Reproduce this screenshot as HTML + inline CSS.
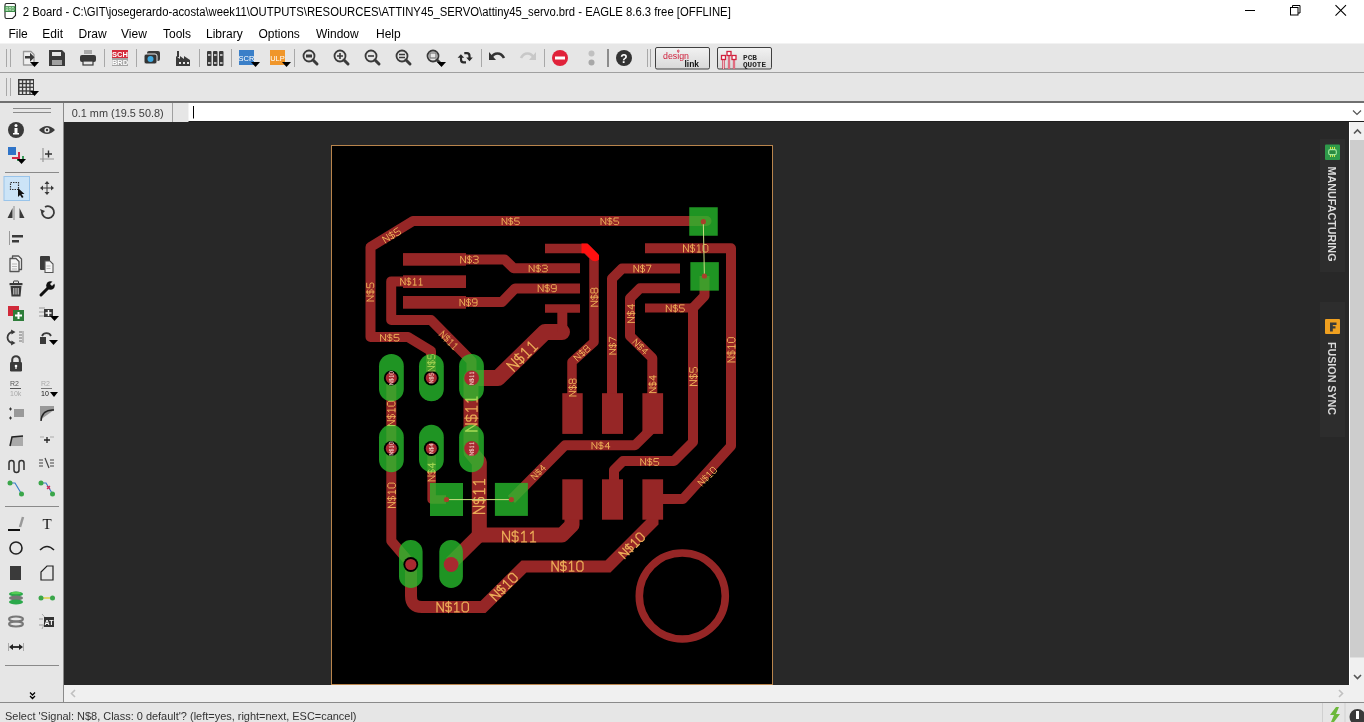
<!DOCTYPE html>
<html><head><meta charset="utf-8">
<style>
*{margin:0;padding:0;box-sizing:border-box}
html,body{width:1364px;height:722px;overflow:hidden;background:#f0f0f0;font-family:"Liberation Sans",sans-serif}
svg{position:absolute;left:0;top:0;will-change:transform}
</style></head><body>
<svg width="1364" height="722" viewBox="0 0 1364 722" font-family="Liberation Sans">
<rect x="0" y="0" width="1364" height="43" fill="#fff"/>
<rect x="0" y="43" width="1364" height="1" fill="#f2f2f2"/><rect x="0" y="44" width="1364" height="28" fill="#e6e6e6"/>
<rect x="0" y="72" width="1364" height="1" fill="#a0a0a0"/>
<rect x="0" y="73" width="1364" height="28" fill="#e6e6e6"/>
<rect x="0" y="101" width="1364" height="2" fill="#707070"/>
<rect x="0" y="103" width="63" height="599" fill="#e6e6e6"/>
<rect x="63" y="103" width="1" height="599" fill="#8a8a8a"/>
<rect x="64" y="103" width="109" height="19" fill="#e8e8e8"/>
<rect x="172" y="103" width="1" height="19" fill="#a0a0a0"/>
<rect x="173" y="103" width="16" height="19" fill="#e6e6e6"/>
<rect x="188.5" y="103" width="1176" height="18" fill="#fff"/>
<rect x="193" y="106" width="1" height="12.5" fill="#000"/>
<path d="M1353 110.5l4 4 4-4" fill="none" stroke="#555" stroke-width="1.2"/>
<rect x="188.5" y="121" width="1176" height="1" fill="#1e1e1e"/><rect x="64" y="122" width="1285" height="563" fill="#282828"/>
<rect x="1349" y="122" width="15" height="563" fill="#f0f0f0"/>
<rect x="1349" y="122" width="1" height="563" fill="#fff"/>
<rect x="1350" y="140" width="14" height="517.5" fill="#cdcdcd"/>
<path d="M1354 133.5l3.5-3.5 3.5 3.5" fill="none" stroke="#555" stroke-width="1.6"/>
<path d="M1354 675l3.5 3.5 3.5-3.5" fill="none" stroke="#555" stroke-width="1.6"/>
<rect x="64" y="685" width="1300" height="17" fill="#f0f0f0"/>
<path d="M75 690l-3.5 3.5 3.5 3.5" fill="none" stroke="#c0c0c0" stroke-width="1.6"/>
<path d="M1339 690l3.5 3.5-3.5 3.5" fill="none" stroke="#c0c0c0" stroke-width="1.6"/>
<rect x="0" y="702" width="1364" height="1" fill="#8a8a8a"/>
<rect x="0" y="703" width="1364" height="19" fill="#e6e6e6"/>
<rect x="1322" y="703" width="1" height="19" fill="#d0d0d0"/>
<rect x="1344.5" y="703" width="1" height="19" fill="#d0d0d0"/>
<path d="M1336 707l-6 8h4l-3 7h3l6-8h-4l3-7z" fill="#6cb83a"/>
<circle cx="1357.5" cy="717" r="8" fill="#3a3a3a"/><rect x="1356" y="711" width="3" height="8" fill="#fff"/>
<!-- right panel tabs -->
<rect x="1320" y="139" width="25" height="133" fill="#2d2d2d"/>
<rect x="1320" y="302" width="25" height="135" fill="#2d2d2d"/>
<rect x="1325" y="144.5" width="15" height="15.5" rx="1" fill="#2e9a4a"/><path d="M1330.5 147v10M1332.5 147v10M1334.5 147v10" stroke="#d8e040" stroke-width="1"/><rect x="1328.7" y="149.7" width="7.6" height="5" rx="1.5" fill="#2a8a40" stroke="#9ee89e" stroke-width="1.2"/>
<rect x="1325" y="319" width="15" height="15" rx="1" fill="#f0a020"/><path d="M1330 331.5V322.5H1336.5V325H1332.8V326.3H1335.5V328.6H1332.8V331.5Z" fill="#3a3a3a"/>
<text transform="translate(1328 166.5) rotate(90)" font-size="10.5" font-weight="bold" fill="#dcdcdc" textLength="95" lengthAdjust="spacingAndGlyphs">MANUFACTURING</text>
<text transform="translate(1328 342) rotate(90)" font-size="10.5" font-weight="bold" fill="#dcdcdc" textLength="73" lengthAdjust="spacingAndGlyphs">FUSION SYNC</text>
<text x="22.8" y="16" font-size="12" fill="#000" textLength="708" lengthAdjust="spacingAndGlyphs">2 Board - C:\GIT\josegerardo-acosta\week11\OUTPUTS\RESOURCES\ATTINY45_SERVO\attiny45_servo.brd - EAGLE 8.6.3 free [OFFLINE]</text>
<path d="M6.5 3.5h7.5q1.5 0 1.5 1.5v10.5l-3 3h-6q-1.5 0-1.5-1.5v-12q0-1.5 1.5-1.5z" fill="#fff" stroke="#222" stroke-width="1.1"/><rect x="4.5" y="6.2" width="11" height="5.8" fill="#3a8a46"/><text x="10" y="11" font-size="5.2" font-weight="bold" fill="#c8f0c8" text-anchor="middle" textLength="9" lengthAdjust="spacingAndGlyphs">BRD</text>
<g font-size="12" fill="#000"><text x="8.4" y="38">File</text><text x="42.3" y="38">Edit</text><text x="78.6" y="38">Draw</text><text x="121" y="38">View</text><text x="163" y="38">Tools</text><text x="206" y="38">Library</text><text x="258.5" y="38">Options</text><text x="316" y="38">Window</text><text x="376" y="38">Help</text></g>
<rect x="1245" y="10" width="10" height="1" fill="#000"/>
<rect x="1290.5" y="7.5" width="7.5" height="7.5" fill="none" stroke="#000" stroke-width="1"/><path d="M1292.5 7.5V5.5h7.5v7.5h-2" fill="none" stroke="#000" stroke-width="1"/>
<path d="M1335.5 5.2l10.5 10.5M1346 5.2l-10.5 10.5" stroke="#000" stroke-width="1.1"/>
<text x="71.7" y="117" font-size="11" fill="#3c3c3c" textLength="92" lengthAdjust="spacingAndGlyphs">0.1 mm (19.5 50.8)</text>
<text x="5" y="720" font-size="11" fill="#333" textLength="351.5" lengthAdjust="spacingAndGlyphs">Select 'Signal: N$8, Class: 0 default'? (left=yes, right=next, ESC=cancel)</text>
<rect x="6" y="49" width="1" height="18" fill="#a8a8a8"/><rect x="10" y="49" width="1" height="18" fill="#a8a8a8"/>
<rect x="6" y="78" width="1" height="18" fill="#a8a8a8"/><rect x="10" y="78" width="1" height="18" fill="#a8a8a8"/>
<rect x="104" y="49" width="1" height="18" fill="#a8a8a8"/>
<rect x="136" y="49" width="1" height="18" fill="#a8a8a8"/>
<rect x="199" y="49" width="1" height="18" fill="#a8a8a8"/>
<rect x="231" y="49" width="1" height="18" fill="#a8a8a8"/>
<rect x="294" y="49" width="1" height="18" fill="#a8a8a8"/>
<rect x="481" y="49" width="1" height="18" fill="#a8a8a8"/>
<rect x="544" y="49" width="1" height="18" fill="#a8a8a8"/>
<rect x="607" y="49" width="2" height="18" fill="#8c8c8c"/>
<rect x="647" y="49" width="1" height="18" fill="#a8a8a8"/><rect x="650" y="49" width="1" height="18" fill="#a8a8a8"/>
<path d="M23.5 51.5h7.5l3 3v10.5h-10.5z" fill="#f0f0f0" stroke="#999" stroke-width="1.3" stroke-linejoin="round"/><path d="M25 56h5v-3.2l4.5 4.5-4.5 4.5v-3.2h-5z" fill="#3a3a3a"/><path d="M30 62h9l-4.5 5z" fill="#000"/>
<path d="M49 50h13l3 3v13h-16z" fill="#3b3b3b"/><rect x="52" y="52" width="9" height="4" fill="#e6e6e6"/><rect x="52" y="60" width="10" height="5" fill="#a0a0a0"/>
<rect x="84" y="50" width="8" height="4" fill="#aaa"/><rect x="80" y="55" width="16" height="7" rx="2" fill="#3a3a3a"/><rect x="83" y="61" width="10" height="4" fill="#e6e6e6" stroke="#3a3a3a" stroke-width="1.2"/>
<rect x="112" y="50" width="16" height="8" fill="#d42c3c"/><rect x="112" y="58" width="16" height="8" fill="#a4a4a4"/><text x="120" y="57" font-size="7.5" font-weight="bold" fill="#fff" text-anchor="middle" font-family="Liberation Sans">SCH</text><text x="120" y="65" font-size="7.5" font-weight="bold" fill="#fff" text-anchor="middle" font-family="Liberation Sans">BRD</text>
<rect x="147" y="51" width="13" height="10" rx="2" fill="#3a3a3a"/><rect x="144" y="54" width="13" height="10" rx="2" fill="#333" stroke="#e6e6e6" stroke-width="1"/><circle cx="150.5" cy="59" r="3" fill="#3fa9e0"/>
<path d="M176 66v-10l4 3v-3l4 3v-3l6 4v6z" fill="#3a3a3a"/><rect x="177" y="51" width="2" height="6" fill="#3a3a3a"/><rect x="179" y="62" width="2" height="2" fill="#e6e6e6"/><rect x="183" y="62" width="2" height="2" fill="#e6e6e6"/><rect x="187" y="62" width="2" height="2" fill="#e6e6e6"/>
<rect x="207" y="51" width="4.5" height="15" rx="1" fill="#3a3a3a"/><rect x="208" y="54" width="2.5" height="2" fill="#bbb"/><rect x="208" y="62" width="2.5" height="2" fill="#bbb"/>
<rect x="213" y="51" width="4.5" height="15" rx="1" fill="#3a3a3a"/><rect x="214" y="54" width="2.5" height="2" fill="#bbb"/><rect x="214" y="62" width="2.5" height="2" fill="#bbb"/>
<rect x="219" y="51" width="4.5" height="15" rx="1" fill="#3a3a3a"/><rect x="220" y="54" width="2.5" height="2" fill="#bbb"/><rect x="220" y="62" width="2.5" height="2" fill="#bbb"/>
<rect x="239" y="50" width="15" height="15" fill="#3a7fc8"/><text x="246.5" y="61" font-size="7.5" fill="#fff" text-anchor="middle" font-family="Liberation Sans">SCR</text><path d="M251 62h9l-4.5 5z" fill="#000"/>
<rect x="270" y="50" width="15" height="15" fill="#f0962a"/><text x="277.5" y="61" font-size="7.5" fill="#fff" text-anchor="middle" font-family="Liberation Sans">ULP</text><path d="M282 62h9l-4.5 5z" fill="#000"/>
<circle cx="309" cy="56" r="5.5" fill="none" stroke="#3a3a3a" stroke-width="1.8"/><path d="M313 60l4 4" stroke="#3a3a3a" stroke-width="3" stroke-linecap="round"/><rect x="306" y="54.5" width="6" height="3" fill="#3a3a3a"/>
<circle cx="340" cy="56" r="5.5" fill="none" stroke="#3a3a3a" stroke-width="1.8"/><path d="M344 60l4 4" stroke="#3a3a3a" stroke-width="3" stroke-linecap="round"/><path d="M337 56h6M340 53v6" stroke="#3a3a3a" stroke-width="1.6"/>
<circle cx="371" cy="56" r="5.5" fill="none" stroke="#3a3a3a" stroke-width="1.8"/><path d="M375 60l4 4" stroke="#3a3a3a" stroke-width="3" stroke-linecap="round"/><path d="M368 56h6" stroke="#3a3a3a" stroke-width="1.6"/>
<circle cx="402" cy="56" r="5.5" fill="none" stroke="#3a3a3a" stroke-width="1.8"/><path d="M406 60l4 4" stroke="#3a3a3a" stroke-width="3" stroke-linecap="round"/><path d="M399 54.5h6M399 57.5h6" stroke="#3a3a3a" stroke-width="1.4"/>
<circle cx="433" cy="56" r="5.5" fill="none" stroke="#3a3a3a" stroke-width="1.8"/><path d="M437 60l4 4" stroke="#3a3a3a" stroke-width="3" stroke-linecap="round"/><rect x="430" y="53" width="6" height="5" fill="none" stroke="#777" stroke-width="1.2"/><path d="M437 62h9l-4.5 5z" fill="#000"/>
<path d="M466 62.3H463.5Q461 62.3 461 59.5V57M464.3 53.2H467Q469.5 53.2 469.5 56V58" fill="none" stroke="#2a2a2a" stroke-width="2.2"/><path d="M457.6 57.8L460.9 54.2L464.2 57.8ZM466.2 57.6L469.5 61.2L472.8 57.6Z" fill="#2a2a2a"/>
<path d="M491 58c3-6 10-6 13 0" fill="none" stroke="#333" stroke-width="2.6"/><path d="M489 52v8h7z" fill="#333"/>
<path d="M521 58c3-6 10-6 13 0" fill="none" stroke="#c8c8c8" stroke-width="2.6"/><path d="M536 52v8h-7z" fill="#c8c8c8"/>
<circle cx="560" cy="58" r="8" fill="#e0223a"/><rect x="555" y="56.5" width="10" height="3" fill="#fff"/>
<circle cx="591.5" cy="53.5" r="3" fill="#c0c0c0"/><circle cx="591.5" cy="62.5" r="3" fill="#a8a8a8"/>
<circle cx="624" cy="58" r="8" fill="#333"/><text x="624" y="62.5" font-size="12" font-weight="bold" fill="#fff" text-anchor="middle" font-family="Liberation Sans">?</text>
<defs><linearGradient id="btng" x1="0" y1="0" x2="0" y2="1"><stop offset="0" stop-color="#f2f2f2"/><stop offset="1" stop-color="#d8d8d8"/></linearGradient></defs>
<rect x="655.5" y="47.5" width="54" height="21.5" rx="1.5" fill="url(#btng)" stroke="#404040"/><text x="663" y="58.5" font-size="9.5" fill="#d0203c" font-family="Liberation Sans" textLength="26" lengthAdjust="spacingAndGlyphs">design</text><text x="684.5" y="67" font-size="9.5" font-weight="bold" fill="#111" font-family="Liberation Sans" textLength="14.5" lengthAdjust="spacingAndGlyphs">link</text><circle cx="678.3" cy="51" r="0.9" fill="none" stroke="#d0203c" stroke-width="0.8"/>
<rect x="717.5" y="47.5" width="54" height="21.5" rx="1.5" fill="url(#btng)" stroke="#404040"/><path d="M723.5 69v-10M729 69v-14M734 69v-10" stroke="#d0203c" stroke-width="2.2" fill="none"/><path d="M723.5 69v-10M729 69v-14M734 69v-10" stroke="#fff" stroke-width="0.7" fill="none"/><rect x="721.5" y="55.5" width="4" height="4" fill="#fff" stroke="#d0203c" stroke-width="1.3"/><rect x="727" y="51.5" width="4" height="4" fill="#fff" stroke="#d0203c" stroke-width="1.3"/><rect x="732" y="55.5" width="4" height="4" fill="#fff" stroke="#d0203c" stroke-width="1.3"/><text x="743" y="60" font-size="7.5" font-weight="bold" fill="#222" font-family="Liberation Mono" textLength="14" lengthAdjust="spacingAndGlyphs">PCB</text><text x="743" y="67" font-size="7.5" font-weight="bold" fill="#222" font-family="Liberation Mono" textLength="23" lengthAdjust="spacingAndGlyphs">QUOTE</text>
<rect x="18" y="79" width="16" height="16" fill="#3a3a3a"/><g fill="#e6e6e6"><rect x="19.5" y="80.5" width="2.4" height="2.4"/><rect x="19.5" y="84.2" width="2.4" height="2.4"/><rect x="19.5" y="87.9" width="2.4" height="2.4"/><rect x="19.5" y="91.6" width="2.4" height="2.4"/><rect x="23.2" y="80.5" width="2.4" height="2.4"/><rect x="23.2" y="84.2" width="2.4" height="2.4"/><rect x="23.2" y="87.9" width="2.4" height="2.4"/><rect x="23.2" y="91.6" width="2.4" height="2.4"/><rect x="26.9" y="80.5" width="2.4" height="2.4"/><rect x="26.9" y="84.2" width="2.4" height="2.4"/><rect x="26.9" y="87.9" width="2.4" height="2.4"/><rect x="26.9" y="91.6" width="2.4" height="2.4"/><rect x="30.6" y="80.5" width="2.4" height="2.4"/><rect x="30.6" y="84.2" width="2.4" height="2.4"/><rect x="30.6" y="87.9" width="2.4" height="2.4"/><rect x="30.6" y="91.6" width="2.4" height="2.4"/></g><path d="M30 91h9l-4.5 5z" fill="#000"/>
<rect x="13" y="108" width="38" height="1" fill="#8a8a8a"/><rect x="13" y="112" width="38" height="1" fill="#8a8a8a"/>
<rect x="5" y="172" width="54" height="1" fill="#8a8a8a"/><rect x="5" y="506" width="54" height="1" fill="#8a8a8a"/><rect x="5" y="665" width="54" height="1" fill="#8a8a8a"/>
<circle cx="16" cy="130" r="8" fill="#3a3a3a"/><rect x="14.5" y="128" width="3" height="6" fill="#fff"/><circle cx="16" cy="125.5" r="1.5" fill="#fff"/><rect x="13" y="133" width="6" height="1.5" fill="#fff"/>
<path d="M39 130q8-8 16 0q-8 8-16 0z" fill="#3a3a3a"/><circle cx="47" cy="130" r="2.6" fill="#e6e6e6"/><circle cx="47" cy="130" r="1.2" fill="#3a3a3a"/>
<rect x="8" y="147" width="8" height="8" fill="#2f74c8"/><path d="M18 152h2v7h-8v-2h6z" fill="#d02a4a"/><path d="M22 156h2v5h-7v-2h5z" fill="#3a9a5a"/><path d="M17 159h9l-4.5 5z" fill="#000"/>
<path d="M43 148v14M40 159h14" stroke="#999" stroke-width="1.2"/><path d="M45 154h7M48.5 150.5v7" stroke="#333" stroke-width="1.4"/>
<rect x="4" y="176.5" width="25.5" height="24" fill="#cce4f7" stroke="#99c4ea" stroke-width="1"/><rect x="10.5" y="182.5" width="8" height="7" fill="none" stroke="#333" stroke-dasharray="1.5 1" stroke-width="1.2"/><path d="M18 188l0 9 2-2 2 3 1.5-1-2-3h3z" fill="#111"/>
<path d="M47 181l-2.5 3h5zM47 195l-2.5-3h5zM40 188l3-2.5v5zM54 188l-3-2.5v5z" fill="#3a3a3a"/><path d="M47 183v10M42 188h10" stroke="#3a3a3a" stroke-width="1"/>
<path d="M14 206v14" stroke="#aaa" stroke-width="1.5"/><path d="M12.5 208l-5 10h5zM19.5 208l5 10h-5z" fill="#3a3a3a"/>
<path d="M42 212a6 6 0 1 0 3-5" fill="none" stroke="#3a3a3a" stroke-width="1.8"/><path d="M40 209l2 5 3-3z" fill="#3a3a3a"/>
<rect x="9" y="231" width="1" height="14" fill="#999"/><rect x="12" y="235" width="11" height="2.5" fill="#3a3a3a"/><rect x="12" y="240" width="7" height="2.5" fill="#3a3a3a"/>
<path d="M12.5 256h6l3 3v10.5h-9z" fill="#f4f4f4" stroke="#555" stroke-width="1.3" stroke-linejoin="round"/><path d="M10 258.5h6l3 3v10h-9z" fill="#f4f4f4" stroke="#555" stroke-width="1.3" stroke-linejoin="round"/><path d="M12 264h5M12 266.5h5M12 269h5" stroke="#aaa" stroke-width="0.8"/>
<rect x="40" y="256" width="10" height="14" rx="1" fill="#3a3a3a"/><path d="M45 261h5l3 3v8.5h-8z" fill="#f4f4f4" stroke="#555" stroke-width="1.1"/><path d="M46.5 266h4M46.5 268.5h4" stroke="#aaa" stroke-width="0.8"/>
<rect x="9.5" y="283" width="13" height="2.2" rx="0.5" fill="#3a3a3a"/><rect x="13.5" y="281" width="5" height="2.5" rx="0.5" fill="none" stroke="#3a3a3a" stroke-width="1"/><path d="M10.5 286h11l-1 10.5h-9z" fill="#3a3a3a"/><path d="M13.8 288v6.5M16 288v6.5M18.2 288v6.5" stroke="#e0e0e0" stroke-width="1"/>
<path d="M41 295l8.5-8.5" stroke="#111" stroke-width="3" stroke-linecap="round"/><circle cx="50.5" cy="285.5" r="4.3" fill="#111"/><path d="M51 285l5-5" stroke="#e6e6e6" stroke-width="2.8"/>
<rect x="8" y="306" width="11" height="10" fill="#d02a3a"/><rect x="13" y="310" width="11" height="11" fill="#2e7d3a"/><path d="M18.5 312v7M15 315.5h7" stroke="#fff" stroke-width="2"/>
<path d="M39 308h6M39 312h6M39 316h6" stroke="#999" stroke-width="1"/><rect x="44" y="309" width="9" height="8" fill="#3a3a3a"/><path d="M48.5 310v6M45.5 313h6" stroke="#fff" stroke-width="1.5"/><path d="M50 316h9l-4.5 5z" fill="#000"/>
<path d="M13 332a5.5 5.5 0 0 0 0 11" fill="none" stroke="#3a3a3a" stroke-width="1.8"/><path d="M11 329.5l4.5 2.5-4 2.5zM11 345.5l4.5-2.5-4-2.5z" fill="#3a3a3a"/><path d="M19 332h4M19 335h4M19 338h4M19 341h4" stroke="#999" stroke-width="1.3"/><rect x="22" y="331" width="2" height="12" fill="#bbb"/>
<path d="M42 336a5 5 0 0 1 9 0" fill="none" stroke="#3a3a3a" stroke-width="1.8"/><rect x="40" y="337" width="6" height="7" fill="#3a3a3a"/><path d="M49 340h9l-4.5 5z" fill="#000"/>
<path d="M12.2 363v-3a3.8 3.8 0 0 1 7.6 0v3" fill="none" stroke="#3a3a3a" stroke-width="2"/><rect x="10" y="362" width="12" height="9.5" rx="1.2" fill="#3a3a3a"/><circle cx="16" cy="366" r="1.3" fill="#fff"/><rect x="15.4" y="366" width="1.2" height="3" fill="#fff"/>
<text x="10" y="386" font-size="7" fill="#555" font-family="Liberation Sans">R2</text><rect x="10" y="388" width="11" height="1" fill="#555"/><text x="10" y="396" font-size="7" fill="#aaa" font-family="Liberation Sans">10k</text>
<text x="41" y="386" font-size="7" fill="#aaa" font-family="Liberation Sans">R2</text><rect x="41" y="388" width="11" height="1" fill="#777"/><text x="41" y="396" font-size="7" fill="#111" font-family="Liberation Sans">10</text><path d="M50 392h8l-4.0 5z" fill="#000"/>
<path d="M9 409h3M10.5 407.5v3M9 418h3M10.5 416.5v3" stroke="#333" stroke-width="1"/><rect x="14" y="409" width="10" height="8" fill="#999"/>
<path d="M40 420v-14h14v4" fill="#999"/><path d="M41 421q1-12 13-11" fill="none" stroke="#222" stroke-width="1.5"/>
<path d="M10 446l2-9 11-1v10z" fill="#aaa"/><path d="M10 446l2-9 11-1" fill="none" stroke="#222" stroke-width="1.5"/>
<path d="M40 437h4M50 437h4" stroke="#aaa" stroke-width="1"/><path d="M44 440h6M47 437v6" stroke="#222" stroke-width="1.3"/>
<path d="M9 470v-7a2.5 2.5 0 0 1 5 0v7a2.5 2.5 0 0 0 5 0v-7a2.5 2.5 0 0 1 5 0v7" fill="none" stroke="#333" stroke-width="1.5"/>
<path d="M39 460h4M39 463h4M39 466h4M50 460h4M50 463h4M50 466h4M45 458l4 10" stroke="#444" stroke-width="1.2"/>
<path d="M10 483h5l6 10" fill="none" stroke="#3a7fc8" stroke-width="1.2"/><circle cx="10" cy="483" r="2.5" fill="#3aa64a"/><circle cx="21.5" cy="494" r="2.5" fill="#3aa64a"/>
<path d="M41 483h5l6 10" fill="none" stroke="#3a7fc8" stroke-width="1.2"/><circle cx="41" cy="483" r="2.5" fill="#3aa64a"/><circle cx="52.5" cy="494" r="2.5" fill="#3aa64a"/><path d="M47 486l3 3M50 486l-3 3" stroke="#d02a5a" stroke-width="1.2"/>
<rect x="8" y="529" width="12" height="2" fill="#111"/><path d="M20 527l3-10" stroke="#999" stroke-width="2.5"/>
<text x="47" y="529" font-size="15" fill="#111" text-anchor="middle" font-family="Liberation Serif">T</text>
<circle cx="16" cy="548" r="6" fill="none" stroke="#222" stroke-width="1.6"/><path d="M40 550q7-7 14 0" fill="none" stroke="#222" stroke-width="1.6"/>
<rect x="10" y="566" width="11" height="14" fill="#3a3a3a"/><path d="M41 580v-8l6-6h6v14z" fill="none" stroke="#222" stroke-width="1.2"/>
<ellipse cx="16" cy="594" rx="7" ry="2.5" fill="#2aa84a"/><ellipse cx="16" cy="598" rx="7" ry="2.5" fill="#777"/><ellipse cx="16" cy="602" rx="7" ry="2.5" fill="#2aa84a"/><ellipse cx="16" cy="593" rx="5" ry="1.2" fill="#5c5"/>
<path d="M40 598h14" stroke="#d8d040" stroke-width="1.5"/><circle cx="41" cy="598" r="2.5" fill="#3aa64a"/><circle cx="52.5" cy="598" r="2.5" fill="#3aa64a"/>
<ellipse cx="16" cy="619" rx="7" ry="2.5" fill="none" stroke="#777" stroke-width="2"/><ellipse cx="16" cy="624" rx="7" ry="2.5" fill="none" stroke="#777" stroke-width="2"/>
<path d="M39 619h4M39 625h4" stroke="#999"/><path d="M42 614q6 4 0 15" fill="none" stroke="#aaa"/><rect x="44" y="617" width="10" height="10" fill="#333"/><text x="49" y="625" font-size="7" font-weight="bold" fill="#fff" text-anchor="middle" font-family="Liberation Sans">AT</text>
<path d="M11 647h10" stroke="#222" stroke-width="1.8"/><path d="M9 647l4-3v6zM23 647l-4-3v6z" fill="#222"/><path d="M8.5 643v8M23.5 643v8" stroke="#999" stroke-width="0.8"/>
<path d="M30 692.5l2.5 2.5 2.5-2.5M30 696l2.5 2.5 2.5-2.5" fill="none" stroke="#000" stroke-width="1.3"/>
<svg x="64" y="122" width="1285" height="563" viewBox="64 122 1285 563" overflow="hidden">
<rect x="331.5" y="145.5" width="441" height="539" fill="#000" stroke="#b8844c" stroke-width="1"/>
<path d="M706.5 221 L413 221 L370.5 247 L370.5 337 L408 337 L431 351 L431 376" fill="none" stroke="#962626" stroke-width="10" stroke-linecap="round" stroke-linejoin="round" stroke-miterlimit="1.3"/>
<path d="M704.5 276 L704.5 296 L693 308 L693 442 L674 461 L623 461 L614 470 L614 485" fill="none" stroke="#962626" stroke-width="10" stroke-linecap="butt" stroke-linejoin="round" stroke-miterlimit="1.3"/>
<path d="M645 308 L693 308" fill="none" stroke="#962626" stroke-width="9" stroke-linecap="butt" stroke-linejoin="round" stroke-miterlimit="1.3"/>
<path d="M645 248.3 L731 248.3 L731 446 L683 499 L660 499" fill="none" stroke="#962626" stroke-width="10" stroke-linecap="butt" stroke-linejoin="round" stroke-miterlimit="1.3"/>
<path d="M411 564 V596 Q411 607 422 607 H483 L524 566.5 H608 L652.5 522 V505" fill="none" stroke="#962626" stroke-width="12" stroke-linejoin="miter" stroke-miterlimit="1.3"/>
<path d="M391.3 378 L391.3 541 L411 564" fill="none" stroke="#962626" stroke-width="10" stroke-linecap="butt" stroke-linejoin="round" stroke-miterlimit="1.3"/>
<path d="M466 281.4 L391.2 281.4 L391.2 320 L431 320 L471.5 361 L471.5 378" fill="none" stroke="#962626" stroke-width="10" stroke-linecap="butt" stroke-linejoin="round" stroke-miterlimit="1.3"/>
<rect x="403" y="275.3" width="63" height="12.7" fill="#962626"/>
<path d="M471.5 378 L498 378 L545 332 L562 332" fill="none" stroke="#962626" stroke-width="16" stroke-linecap="round" stroke-linejoin="round" stroke-miterlimit="1.3"/>
<path d="M562.3 308 L562.3 332" fill="none" stroke="#962626" stroke-width="10" stroke-linecap="butt" stroke-linejoin="round" stroke-miterlimit="1.3"/>
<path d="M545 308.5 L580 308.5" fill="none" stroke="#962626" stroke-width="8.5" stroke-linecap="butt" stroke-linejoin="round" stroke-miterlimit="1.3"/>
<path d="M471 378 L471 452 L479.3 462 L479.3 535 L562 535 L572 525 L572 500" fill="none" stroke="#962626" stroke-width="15" stroke-linecap="butt" stroke-linejoin="round" stroke-miterlimit="1.3"/>
<path d="M479.3 535 L451 563" fill="none" stroke="#962626" stroke-width="14" stroke-linecap="butt" stroke-linejoin="round" stroke-miterlimit="1.3"/>
<rect x="403" y="253.1" width="63" height="12.6" fill="#962626"/>
<path d="M466 259.4 L504.5 259.4 L513.5 268.2 L580 268.2" fill="none" stroke="#962626" stroke-width="10" stroke-linecap="butt" stroke-linejoin="round" stroke-miterlimit="1.3"/>
<rect x="403" y="296" width="63" height="12.7" fill="#962626"/>
<path d="M466 302 L502 302 L515 288.5 L580 288.5" fill="none" stroke="#962626" stroke-width="10" stroke-linecap="butt" stroke-linejoin="round" stroke-miterlimit="1.3"/>
<path d="M545 248.5 L586 248.5 L594 256.5 L594 342 L572 362 L572 400" fill="none" stroke="#962626" stroke-width="9.5" stroke-linecap="butt" stroke-linejoin="round" stroke-miterlimit="1.3"/>
<path d="M581.5 243.6H587.5L599 255V259.5Q596.5 262.5 592 260.5L585 253.3H581.5Z" fill="#ff1010"/>
<path d="M680 268.6 L622 268.6 L612 278.6 L612 400" fill="none" stroke="#962626" stroke-width="10" stroke-linecap="butt" stroke-linejoin="round" stroke-miterlimit="1.3"/>
<path d="M680 288.2 L640 288.2 L630 298.2 L630 336 L652.3 358 L652.3 400" fill="none" stroke="#962626" stroke-width="10" stroke-linecap="butt" stroke-linejoin="round" stroke-miterlimit="1.3"/>
<path d="M652.5 428 L635 445.2 L565 445.2 L511.4 499.4" fill="none" stroke="#962626" stroke-width="10" stroke-linecap="butt" stroke-linejoin="round" stroke-miterlimit="1.3"/>
<path d="M431.6 448 L431.6 499.5 L446 499.5" fill="none" stroke="#962626" stroke-width="8.5" stroke-linecap="butt" stroke-linejoin="round" stroke-miterlimit="1.3"/>
<rect x="562.3" y="393.2" width="20.4" height="40.7" fill="#962626"/>
<rect x="562.3" y="479.3" width="20.4" height="40.4" fill="#962626"/>
<rect x="602" y="393.2" width="21" height="40.7" fill="#962626"/>
<rect x="602" y="479.3" width="21" height="40.4" fill="#962626"/>
<rect x="642.4" y="393.2" width="20.7" height="40.7" fill="#962626"/>
<rect x="642.4" y="479.3" width="20.7" height="40.4" fill="#962626"/>
<circle cx="682.3" cy="596" r="43" fill="none" stroke="#962626" stroke-width="7.6"/>
<path transform="translate(510.7 221.3) rotate(0) scale(0.7773 0.6700) translate(-11.0 -5)" d="M0 10V0L6 10V0M13.6 1.6L12.6 0.8H9.4L8.4 1.8V3.6L9.4 4.6H12.6L13.6 5.6V8.2L12.6 9.2H9.4L8.4 8.4M11 -0.6V10.6M21.8 0H16.4L16 4.6H20.6L22 5.8V8.6L20.8 10H17.2L16 8.8" fill="none" stroke="#eaaa56" stroke-width="1.0" stroke-linecap="round" stroke-linejoin="round" vector-effect="non-scaling-stroke"/>
<path transform="translate(609.8 221.3) rotate(0) scale(0.8000 0.6700) translate(-11.0 -5)" d="M0 10V0L6 10V0M13.6 1.6L12.6 0.8H9.4L8.4 1.8V3.6L9.4 4.6H12.6L13.6 5.6V8.2L12.6 9.2H9.4L8.4 8.4M11 -0.6V10.6M21.8 0H16.4L16 4.6H20.6L22 5.8V8.6L20.8 10H17.2L16 8.8" fill="none" stroke="#eaaa56" stroke-width="1.0" stroke-linecap="round" stroke-linejoin="round" vector-effect="non-scaling-stroke"/>
<path transform="translate(389.8 337.7) rotate(0) scale(0.8364 0.6600) translate(-11.0 -5)" d="M0 10V0L6 10V0M13.6 1.6L12.6 0.8H9.4L8.4 1.8V3.6L9.4 4.6H12.6L13.6 5.6V8.2L12.6 9.2H9.4L8.4 8.4M11 -0.6V10.6M21.8 0H16.4L16 4.6H20.6L22 5.8V8.6L20.8 10H17.2L16 8.8" fill="none" stroke="#eaaa56" stroke-width="1.0" stroke-linecap="round" stroke-linejoin="round" vector-effect="non-scaling-stroke"/>
<path transform="translate(411.8 281.6) rotate(0) scale(0.7400 0.7000) translate(-15.0 -5)" d="M0 10V0L6 10V0M13.6 1.6L12.6 0.8H9.4L8.4 1.8V3.6L9.4 4.6H12.6L13.6 5.6V8.2L12.6 9.2H9.4L8.4 8.4M11 -0.6V10.6M16.8 2.2L19 0V10M16.8 10H21.2M24.8 2.2L27 0V10M24.8 10H29.2" fill="none" stroke="#eaaa56" stroke-width="1.0" stroke-linecap="round" stroke-linejoin="round" vector-effect="non-scaling-stroke"/>
<path transform="translate(469.4 259.6) rotate(0) scale(0.7909 0.7000) translate(-11.0 -5)" d="M0 10V0L6 10V0M13.6 1.6L12.6 0.8H9.4L8.4 1.8V3.6L9.4 4.6H12.6L13.6 5.6V8.2L12.6 9.2H9.4L8.4 8.4M11 -0.6V10.6M16 1.2L17 0H21L22 1.2V3.8L21 4.9H18.2M21 4.9L22 6V8.8L21 10H17L16 8.8" fill="none" stroke="#eaaa56" stroke-width="1.0" stroke-linecap="round" stroke-linejoin="round" vector-effect="non-scaling-stroke"/>
<path transform="translate(538.2 268.5) rotate(0) scale(0.8182 0.6600) translate(-11.0 -5)" d="M0 10V0L6 10V0M13.6 1.6L12.6 0.8H9.4L8.4 1.8V3.6L9.4 4.6H12.6L13.6 5.6V8.2L12.6 9.2H9.4L8.4 8.4M11 -0.6V10.6M16 1.2L17 0H21L22 1.2V3.8L21 4.9H18.2M21 4.9L22 6V8.8L21 10H17L16 8.8" fill="none" stroke="#eaaa56" stroke-width="1.0" stroke-linecap="round" stroke-linejoin="round" vector-effect="non-scaling-stroke"/>
<path transform="translate(468.5 302.4) rotate(0) scale(0.7727 0.6900) translate(-11.0 -5)" d="M0 10V0L6 10V0M13.6 1.6L12.6 0.8H9.4L8.4 1.8V3.6L9.4 4.6H12.6L13.6 5.6V8.2L12.6 9.2H9.4L8.4 8.4M11 -0.6V10.6M22 4.6L21 5.6H17L16 4.6V1L17 0H21L22 1V8.6L20.6 10H17.4L16.4 9" fill="none" stroke="#eaaa56" stroke-width="1.0" stroke-linecap="round" stroke-linejoin="round" vector-effect="non-scaling-stroke"/>
<path transform="translate(547.2 288.2) rotate(0) scale(0.8182 0.7000) translate(-11.0 -5)" d="M0 10V0L6 10V0M13.6 1.6L12.6 0.8H9.4L8.4 1.8V3.6L9.4 4.6H12.6L13.6 5.6V8.2L12.6 9.2H9.4L8.4 8.4M11 -0.6V10.6M22 4.6L21 5.6H17L16 4.6V1L17 0H21L22 1V8.6L20.6 10H17.4L16.4 9" fill="none" stroke="#eaaa56" stroke-width="1.0" stroke-linecap="round" stroke-linejoin="round" vector-effect="non-scaling-stroke"/>
<path transform="translate(642.5 268.7) rotate(0) scale(0.7773 0.7000) translate(-11.0 -5)" d="M0 10V0L6 10V0M13.6 1.6L12.6 0.8H9.4L8.4 1.8V3.6L9.4 4.6H12.6L13.6 5.6V8.2L12.6 9.2H9.4L8.4 8.4M11 -0.6V10.6M16 0H22L18 10" fill="none" stroke="#eaaa56" stroke-width="1.0" stroke-linecap="round" stroke-linejoin="round" vector-effect="non-scaling-stroke"/>
<path transform="translate(695.7 248.3) rotate(0) scale(0.8133 0.7600) translate(-15.0 -5)" d="M0 10V0L6 10V0M13.6 1.6L12.6 0.8H9.4L8.4 1.8V3.6L9.4 4.6H12.6L13.6 5.6V8.2L12.6 9.2H9.4L8.4 8.4M11 -0.6V10.6M16.8 2.2L19 0V10M16.8 10H21.2M25.6 0H28.4L30 1.8V8.2L28.4 10H25.6L24 8.2V1.8Z" fill="none" stroke="#eaaa56" stroke-width="1.0" stroke-linecap="round" stroke-linejoin="round" vector-effect="non-scaling-stroke"/>
<path transform="translate(675.3 308.3) rotate(0) scale(0.8182 0.6900) translate(-11.0 -5)" d="M0 10V0L6 10V0M13.6 1.6L12.6 0.8H9.4L8.4 1.8V3.6L9.4 4.6H12.6L13.6 5.6V8.2L12.6 9.2H9.4L8.4 8.4M11 -0.6V10.6M21.8 0H16.4L16 4.6H20.6L22 5.8V8.6L20.8 10H17.2L16 8.8" fill="none" stroke="#eaaa56" stroke-width="1.0" stroke-linecap="round" stroke-linejoin="round" vector-effect="non-scaling-stroke"/>
<path transform="translate(600.9 445.6) rotate(0) scale(0.8091 0.6600) translate(-11.0 -5)" d="M0 10V0L6 10V0M13.6 1.6L12.6 0.8H9.4L8.4 1.8V3.6L9.4 4.6H12.6L13.6 5.6V8.2L12.6 9.2H9.4L8.4 8.4M11 -0.6V10.6M20.4 10V0L16 6.8H22" fill="none" stroke="#eaaa56" stroke-width="1.0" stroke-linecap="round" stroke-linejoin="round" vector-effect="non-scaling-stroke"/>
<path transform="translate(649.7 461.9) rotate(0) scale(0.8136 0.6800) translate(-11.0 -5)" d="M0 10V0L6 10V0M13.6 1.6L12.6 0.8H9.4L8.4 1.8V3.6L9.4 4.6H12.6L13.6 5.6V8.2L12.6 9.2H9.4L8.4 8.4M11 -0.6V10.6M21.8 0H16.4L16 4.6H20.6L22 5.8V8.6L20.8 10H17.2L16 8.8" fill="none" stroke="#eaaa56" stroke-width="1.0" stroke-linecap="round" stroke-linejoin="round" vector-effect="non-scaling-stroke"/>
<path transform="translate(519.6 536.5) rotate(0) scale(1.1267 1.0800) translate(-15.0 -5)" d="M0 10V0L6 10V0M13.6 1.6L12.6 0.8H9.4L8.4 1.8V3.6L9.4 4.6H12.6L13.6 5.6V8.2L12.6 9.2H9.4L8.4 8.4M11 -0.6V10.6M16.8 2.2L19 0V10M16.8 10H21.2M24.8 2.2L27 0V10M24.8 10H29.2" fill="none" stroke="#eaaa56" stroke-width="1.3" stroke-linecap="round" stroke-linejoin="round" vector-effect="non-scaling-stroke"/>
<path transform="translate(567.5 566.2) rotate(0) scale(1.0333 1.0000) translate(-15.0 -5)" d="M0 10V0L6 10V0M13.6 1.6L12.6 0.8H9.4L8.4 1.8V3.6L9.4 4.6H12.6L13.6 5.6V8.2L12.6 9.2H9.4L8.4 8.4M11 -0.6V10.6M16.8 2.2L19 0V10M16.8 10H21.2M25.6 0H28.4L30 1.8V8.2L28.4 10H25.6L24 8.2V1.8Z" fill="none" stroke="#eaaa56" stroke-width="1.3" stroke-linecap="round" stroke-linejoin="round" vector-effect="non-scaling-stroke"/>
<path transform="translate(452.7 607) rotate(0) scale(1.0467 0.9800) translate(-15.0 -5)" d="M0 10V0L6 10V0M13.6 1.6L12.6 0.8H9.4L8.4 1.8V3.6L9.4 4.6H12.6L13.6 5.6V8.2L12.6 9.2H9.4L8.4 8.4M11 -0.6V10.6M16.8 2.2L19 0V10M16.8 10H21.2M25.6 0H28.4L30 1.8V8.2L28.4 10H25.6L24 8.2V1.8Z" fill="none" stroke="#eaaa56" stroke-width="1.3" stroke-linecap="round" stroke-linejoin="round" vector-effect="non-scaling-stroke"/>
<path transform="translate(370.2 292) rotate(-90) scale(0.8182 0.7000) translate(-11.0 -5)" d="M0 10V0L6 10V0M13.6 1.6L12.6 0.8H9.4L8.4 1.8V3.6L9.4 4.6H12.6L13.6 5.6V8.2L12.6 9.2H9.4L8.4 8.4M11 -0.6V10.6M21.8 0H16.4L16 4.6H20.6L22 5.8V8.6L20.8 10H17.2L16 8.8" fill="none" stroke="#eaaa56" stroke-width="1.0" stroke-linecap="round" stroke-linejoin="round" vector-effect="non-scaling-stroke"/>
<path transform="translate(594.3 297.2) rotate(-90) scale(0.8182 0.7000) translate(-11.0 -5)" d="M0 10V0L6 10V0M13.6 1.6L12.6 0.8H9.4L8.4 1.8V3.6L9.4 4.6H12.6L13.6 5.6V8.2L12.6 9.2H9.4L8.4 8.4M11 -0.6V10.6M17 0H21L21.8 1V3.8L21 4.8H17L16.2 3.8V1ZM17 4.8L16 5.8V9L17 10H21L22 9V5.8L21 4.8" fill="none" stroke="#eaaa56" stroke-width="1.0" stroke-linecap="round" stroke-linejoin="round" vector-effect="non-scaling-stroke"/>
<path transform="translate(631 313.4) rotate(-90) scale(0.8182 0.7000) translate(-11.0 -5)" d="M0 10V0L6 10V0M13.6 1.6L12.6 0.8H9.4L8.4 1.8V3.6L9.4 4.6H12.6L13.6 5.6V8.2L12.6 9.2H9.4L8.4 8.4M11 -0.6V10.6M20.4 10V0L16 6.8H22" fill="none" stroke="#eaaa56" stroke-width="1.0" stroke-linecap="round" stroke-linejoin="round" vector-effect="non-scaling-stroke"/>
<path transform="translate(572.6 387.5) rotate(-90) scale(0.7727 0.7000) translate(-11.0 -5)" d="M0 10V0L6 10V0M13.6 1.6L12.6 0.8H9.4L8.4 1.8V3.6L9.4 4.6H12.6L13.6 5.6V8.2L12.6 9.2H9.4L8.4 8.4M11 -0.6V10.6M17 0H21L21.8 1V3.8L21 4.8H17L16.2 3.8V1ZM17 4.8L16 5.8V9L17 10H21L22 9V5.8L21 4.8" fill="none" stroke="#eaaa56" stroke-width="1.0" stroke-linecap="round" stroke-linejoin="round" vector-effect="non-scaling-stroke"/>
<path transform="translate(612.6 345.6) rotate(-90) scale(0.7727 0.6600) translate(-11.0 -5)" d="M0 10V0L6 10V0M13.6 1.6L12.6 0.8H9.4L8.4 1.8V3.6L9.4 4.6H12.6L13.6 5.6V8.2L12.6 9.2H9.4L8.4 8.4M11 -0.6V10.6M16 0H22L18 10" fill="none" stroke="#eaaa56" stroke-width="1.0" stroke-linecap="round" stroke-linejoin="round" vector-effect="non-scaling-stroke"/>
<path transform="translate(652.6 384.1) rotate(-90) scale(0.7727 0.7000) translate(-11.0 -5)" d="M0 10V0L6 10V0M13.6 1.6L12.6 0.8H9.4L8.4 1.8V3.6L9.4 4.6H12.6L13.6 5.6V8.2L12.6 9.2H9.4L8.4 8.4M11 -0.6V10.6M20.4 10V0L16 6.8H22" fill="none" stroke="#eaaa56" stroke-width="1.0" stroke-linecap="round" stroke-linejoin="round" vector-effect="non-scaling-stroke"/>
<path transform="translate(693.4 376.5) rotate(-90) scale(0.8182 0.7400) translate(-11.0 -5)" d="M0 10V0L6 10V0M13.6 1.6L12.6 0.8H9.4L8.4 1.8V3.6L9.4 4.6H12.6L13.6 5.6V8.2L12.6 9.2H9.4L8.4 8.4M11 -0.6V10.6M21.8 0H16.4L16 4.6H20.6L22 5.8V8.6L20.8 10H17.2L16 8.8" fill="none" stroke="#eaaa56" stroke-width="1.0" stroke-linecap="round" stroke-linejoin="round" vector-effect="non-scaling-stroke"/>
<path transform="translate(731.2 349.8) rotate(-90) scale(0.8100 0.7600) translate(-15.0 -5)" d="M0 10V0L6 10V0M13.6 1.6L12.6 0.8H9.4L8.4 1.8V3.6L9.4 4.6H12.6L13.6 5.6V8.2L12.6 9.2H9.4L8.4 8.4M11 -0.6V10.6M16.8 2.2L19 0V10M16.8 10H21.2M25.6 0H28.4L30 1.8V8.2L28.4 10H25.6L24 8.2V1.8Z" fill="none" stroke="#eaaa56" stroke-width="1.0" stroke-linecap="round" stroke-linejoin="round" vector-effect="non-scaling-stroke"/>
<path transform="translate(471.3 413.5) rotate(-90) scale(1.1667 1.1500) translate(-15.0 -5)" d="M0 10V0L6 10V0M13.6 1.6L12.6 0.8H9.4L8.4 1.8V3.6L9.4 4.6H12.6L13.6 5.6V8.2L12.6 9.2H9.4L8.4 8.4M11 -0.6V10.6M16.8 2.2L19 0V10M16.8 10H21.2M24.8 2.2L27 0V10M24.8 10H29.2" fill="none" stroke="#eaaa56" stroke-width="1.3" stroke-linecap="round" stroke-linejoin="round" vector-effect="non-scaling-stroke"/>
<path transform="translate(478.9 495.9) rotate(-90) scale(1.1667 1.1500) translate(-15.0 -5)" d="M0 10V0L6 10V0M13.6 1.6L12.6 0.8H9.4L8.4 1.8V3.6L9.4 4.6H12.6L13.6 5.6V8.2L12.6 9.2H9.4L8.4 8.4M11 -0.6V10.6M16.8 2.2L19 0V10M16.8 10H21.2M24.8 2.2L27 0V10M24.8 10H29.2" fill="none" stroke="#eaaa56" stroke-width="1.3" stroke-linecap="round" stroke-linejoin="round" vector-effect="non-scaling-stroke"/>
<path transform="translate(391.2 413.4) rotate(-90) scale(0.8100 0.7600) translate(-15.0 -5)" d="M0 10V0L6 10V0M13.6 1.6L12.6 0.8H9.4L8.4 1.8V3.6L9.4 4.6H12.6L13.6 5.6V8.2L12.6 9.2H9.4L8.4 8.4M11 -0.6V10.6M16.8 2.2L19 0V10M16.8 10H21.2M25.6 0H28.4L30 1.8V8.2L28.4 10H25.6L24 8.2V1.8Z" fill="none" stroke="#eaaa56" stroke-width="1.0" stroke-linecap="round" stroke-linejoin="round" vector-effect="non-scaling-stroke"/>
<path transform="translate(391.6 495.3) rotate(-90) scale(0.8133 0.7600) translate(-15.0 -5)" d="M0 10V0L6 10V0M13.6 1.6L12.6 0.8H9.4L8.4 1.8V3.6L9.4 4.6H12.6L13.6 5.6V8.2L12.6 9.2H9.4L8.4 8.4M11 -0.6V10.6M16.8 2.2L19 0V10M16.8 10H21.2M25.6 0H28.4L30 1.8V8.2L28.4 10H25.6L24 8.2V1.8Z" fill="none" stroke="#eaaa56" stroke-width="1.0" stroke-linecap="round" stroke-linejoin="round" vector-effect="non-scaling-stroke"/>
<path transform="translate(431.5 472) rotate(-90) scale(0.8091 0.7400) translate(-11.0 -5)" d="M0 10V0L6 10V0M13.6 1.6L12.6 0.8H9.4L8.4 1.8V3.6L9.4 4.6H12.6L13.6 5.6V8.2L12.6 9.2H9.4L8.4 8.4M11 -0.6V10.6M20.4 10V0L16 6.8H22" fill="none" stroke="#eaaa56" stroke-width="1.0" stroke-linecap="round" stroke-linejoin="round" vector-effect="non-scaling-stroke"/>
<path transform="translate(391.7 235.3) rotate(-31.5) scale(0.8182 0.7000) translate(-11.0 -5)" d="M0 10V0L6 10V0M13.6 1.6L12.6 0.8H9.4L8.4 1.8V3.6L9.4 4.6H12.6L13.6 5.6V8.2L12.6 9.2H9.4L8.4 8.4M11 -0.6V10.6M21.8 0H16.4L16 4.6H20.6L22 5.8V8.6L20.8 10H17.2L16 8.8" fill="none" stroke="#eaaa56" stroke-width="1.0" stroke-linecap="round" stroke-linejoin="round" vector-effect="non-scaling-stroke"/>
<path transform="translate(449 340.5) rotate(45) scale(0.7000 0.6800) translate(-15.0 -5)" d="M0 10V0L6 10V0M13.6 1.6L12.6 0.8H9.4L8.4 1.8V3.6L9.4 4.6H12.6L13.6 5.6V8.2L12.6 9.2H9.4L8.4 8.4M11 -0.6V10.6M16.8 2.2L19 0V10M16.8 10H21.2M24.8 2.2L27 0V10M24.8 10H29.2" fill="none" stroke="#eaaa56" stroke-width="1.0" stroke-linecap="round" stroke-linejoin="round" vector-effect="non-scaling-stroke"/>
<path transform="translate(522.5 355.4) rotate(-45) scale(1.1333 1.1000) translate(-15.0 -5)" d="M0 10V0L6 10V0M13.6 1.6L12.6 0.8H9.4L8.4 1.8V3.6L9.4 4.6H12.6L13.6 5.6V8.2L12.6 9.2H9.4L8.4 8.4M11 -0.6V10.6M16.8 2.2L19 0V10M16.8 10H21.2M24.8 2.2L27 0V10M24.8 10H29.2" fill="none" stroke="#eaaa56" stroke-width="1.3" stroke-linecap="round" stroke-linejoin="round" vector-effect="non-scaling-stroke"/>
<path transform="translate(582 353) rotate(-42) scale(0.7727 0.6600) translate(-11.0 -5)" d="M0 10V0L6 10V0M13.6 1.6L12.6 0.8H9.4L8.4 1.8V3.6L9.4 4.6H12.6L13.6 5.6V8.2L12.6 9.2H9.4L8.4 8.4M11 -0.6V10.6M17 0H21L21.8 1V3.8L21 4.8H17L16.2 3.8V1ZM17 4.8L16 5.8V9L17 10H21L22 9V5.8L21 4.8" fill="none" stroke="#eaaa56" stroke-width="1.0" stroke-linecap="round" stroke-linejoin="round" vector-effect="non-scaling-stroke"/>
<path transform="translate(640.5 346.8) rotate(45) scale(0.7500 0.6500) translate(-11.0 -5)" d="M0 10V0L6 10V0M13.6 1.6L12.6 0.8H9.4L8.4 1.8V3.6L9.4 4.6H12.6L13.6 5.6V8.2L12.6 9.2H9.4L8.4 8.4M11 -0.6V10.6M20.4 10V0L16 6.8H22" fill="none" stroke="#eaaa56" stroke-width="1.0" stroke-linecap="round" stroke-linejoin="round" vector-effect="non-scaling-stroke"/>
<path transform="translate(538.5 472.1) rotate(-45) scale(0.7045 0.6300) translate(-11.0 -5)" d="M0 10V0L6 10V0M13.6 1.6L12.6 0.8H9.4L8.4 1.8V3.6L9.4 4.6H12.6L13.6 5.6V8.2L12.6 9.2H9.4L8.4 8.4M11 -0.6V10.6M20.4 10V0L16 6.8H22" fill="none" stroke="#eaaa56" stroke-width="1.0" stroke-linecap="round" stroke-linejoin="round" vector-effect="non-scaling-stroke"/>
<path transform="translate(707.4 476.3) rotate(-45) scale(0.7000 0.6600) translate(-15.0 -5)" d="M0 10V0L6 10V0M13.6 1.6L12.6 0.8H9.4L8.4 1.8V3.6L9.4 4.6H12.6L13.6 5.6V8.2L12.6 9.2H9.4L8.4 8.4M11 -0.6V10.6M16.8 2.2L19 0V10M16.8 10H21.2M25.6 0H28.4L30 1.8V8.2L28.4 10H25.6L24 8.2V1.8Z" fill="none" stroke="#eaaa56" stroke-width="1.0" stroke-linecap="round" stroke-linejoin="round" vector-effect="non-scaling-stroke"/>
<path transform="translate(504 586.6) rotate(-45) scale(1.0333 0.9500) translate(-15.0 -5)" d="M0 10V0L6 10V0M13.6 1.6L12.6 0.8H9.4L8.4 1.8V3.6L9.4 4.6H12.6L13.6 5.6V8.2L12.6 9.2H9.4L8.4 8.4M11 -0.6V10.6M16.8 2.2L19 0V10M16.8 10H21.2M25.6 0H28.4L30 1.8V8.2L28.4 10H25.6L24 8.2V1.8Z" fill="none" stroke="#eaaa56" stroke-width="1.3" stroke-linecap="round" stroke-linejoin="round" vector-effect="non-scaling-stroke"/>
<path transform="translate(632 545.3) rotate(-45) scale(0.9533 0.9000) translate(-15.0 -5)" d="M0 10V0L6 10V0M13.6 1.6L12.6 0.8H9.4L8.4 1.8V3.6L9.4 4.6H12.6L13.6 5.6V8.2L12.6 9.2H9.4L8.4 8.4M11 -0.6V10.6M16.8 2.2L19 0V10M16.8 10H21.2M25.6 0H28.4L30 1.8V8.2L28.4 10H25.6L24 8.2V1.8Z" fill="none" stroke="#eaaa56" stroke-width="1.3" stroke-linecap="round" stroke-linejoin="round" vector-effect="non-scaling-stroke"/>
<rect x="379.0" y="353.90000000000003" width="24.8" height="47.4" rx="12.4" fill="rgba(40,190,45,0.78)"/>
<rect x="419.0" y="353.90000000000003" width="24.8" height="47.4" rx="12.4" fill="rgba(40,190,45,0.78)"/>
<rect x="459.1" y="353.90000000000003" width="24.8" height="47.4" rx="12.4" fill="rgba(40,190,45,0.78)"/>
<rect x="379.0" y="424.8" width="24.8" height="47.4" rx="12.4" fill="rgba(40,190,45,0.78)"/>
<rect x="419.0" y="424.8" width="24.8" height="47.4" rx="12.4" fill="rgba(40,190,45,0.78)"/>
<rect x="459.1" y="424.8" width="24.8" height="47.4" rx="12.4" fill="rgba(40,190,45,0.78)"/>
<rect x="399.0" y="540" width="23.6" height="48" rx="11.8" fill="rgba(40,190,45,0.78)"/>
<rect x="439.3" y="540" width="23.6" height="48" rx="11.8" fill="rgba(40,190,45,0.78)"/>
<rect x="689.25" y="207.25" width="28.5" height="28.5" fill="rgba(40,190,45,0.78)"/>
<rect x="690.35" y="262.15" width="28.5" height="28.5" fill="rgba(40,190,45,0.78)"/>
<rect x="430.0" y="483.0" width="33" height="33" fill="rgba(40,190,45,0.78)"/>
<rect x="494.9" y="482.9" width="33" height="33" fill="rgba(40,190,45,0.78)"/>
<circle cx="391.3" cy="378" r="7.4" fill="#000"/><circle cx="391.3" cy="378" r="5.6" fill="#a82a30"/>
<circle cx="431.3" cy="378" r="7.4" fill="#000"/><circle cx="431.3" cy="378" r="5.6" fill="#a82a30"/>
<circle cx="391.3" cy="448.5" r="7.4" fill="#000"/><circle cx="391.3" cy="448.5" r="5.6" fill="#a82a30"/>
<circle cx="431.3" cy="448.5" r="7.4" fill="#000"/><circle cx="431.3" cy="448.5" r="5.6" fill="#a82a30"/>
<circle cx="410.8" cy="564.5" r="7.4" fill="#000"/><circle cx="410.8" cy="564.5" r="5.6" fill="#a82a30"/>
<circle cx="471.6" cy="378" r="7.4" fill="#a82a30"/>
<circle cx="471.6" cy="448.5" r="7.4" fill="#a82a30"/>
<circle cx="451.1" cy="564.5" r="7.4" fill="#a82a30"/>
<path transform="translate(391.3 378) rotate(-90) scale(0.4267 0.4200) translate(-15.0 -5)" d="M0 10V0L6 10V0M13.6 1.6L12.6 0.8H9.4L8.4 1.8V3.6L9.4 4.6H12.6L13.6 5.6V8.2L12.6 9.2H9.4L8.4 8.4M11 -0.6V10.6M16.8 2.2L19 0V10M16.8 10H21.2M25.6 0H28.4L30 1.8V8.2L28.4 10H25.6L24 8.2V1.8Z" fill="none" stroke="#f0c8c0" stroke-width="0.8" vector-effect="non-scaling-stroke"/>
<path transform="translate(431.3 378) rotate(-90) scale(0.4364 0.4200) translate(-11.0 -5)" d="M0 10V0L6 10V0M13.6 1.6L12.6 0.8H9.4L8.4 1.8V3.6L9.4 4.6H12.6L13.6 5.6V8.2L12.6 9.2H9.4L8.4 8.4M11 -0.6V10.6M21.8 0H16.4L16 4.6H20.6L22 5.8V8.6L20.8 10H17.2L16 8.8" fill="none" stroke="#f0c8c0" stroke-width="0.8" vector-effect="non-scaling-stroke"/>
<path transform="translate(471.6 378) rotate(-90) scale(0.4267 0.4200) translate(-15.0 -5)" d="M0 10V0L6 10V0M13.6 1.6L12.6 0.8H9.4L8.4 1.8V3.6L9.4 4.6H12.6L13.6 5.6V8.2L12.6 9.2H9.4L8.4 8.4M11 -0.6V10.6M16.8 2.2L19 0V10M16.8 10H21.2M24.8 2.2L27 0V10M24.8 10H29.2" fill="none" stroke="#f0c8c0" stroke-width="0.8" vector-effect="non-scaling-stroke"/>
<path transform="translate(391.3 448.5) rotate(-90) scale(0.4267 0.4200) translate(-15.0 -5)" d="M0 10V0L6 10V0M13.6 1.6L12.6 0.8H9.4L8.4 1.8V3.6L9.4 4.6H12.6L13.6 5.6V8.2L12.6 9.2H9.4L8.4 8.4M11 -0.6V10.6M16.8 2.2L19 0V10M16.8 10H21.2M25.6 0H28.4L30 1.8V8.2L28.4 10H25.6L24 8.2V1.8Z" fill="none" stroke="#f0c8c0" stroke-width="0.8" vector-effect="non-scaling-stroke"/>
<path transform="translate(431.3 448.5) rotate(-90) scale(0.4364 0.4200) translate(-11.0 -5)" d="M0 10V0L6 10V0M13.6 1.6L12.6 0.8H9.4L8.4 1.8V3.6L9.4 4.6H12.6L13.6 5.6V8.2L12.6 9.2H9.4L8.4 8.4M11 -0.6V10.6M20.4 10V0L16 6.8H22" fill="none" stroke="#f0c8c0" stroke-width="0.8" vector-effect="non-scaling-stroke"/>
<path transform="translate(471.6 448.5) rotate(-90) scale(0.4267 0.4200) translate(-15.0 -5)" d="M0 10V0L6 10V0M13.6 1.6L12.6 0.8H9.4L8.4 1.8V3.6L9.4 4.6H12.6L13.6 5.6V8.2L12.6 9.2H9.4L8.4 8.4M11 -0.6V10.6M16.8 2.2L19 0V10M16.8 10H21.2M24.8 2.2L27 0V10M24.8 10H29.2" fill="none" stroke="#f0c8c0" stroke-width="0.8" vector-effect="non-scaling-stroke"/>
<path d="M703.3 221.7L704.4 276M446.5 499.6H511.4" stroke="#c8e080" stroke-width="1" fill="none"/>
<circle cx="703.3" cy="221.7" r="2.6" fill="#a8402a"/>
<circle cx="704.4" cy="276" r="2.6" fill="#a8402a"/>
<circle cx="446.5" cy="499.5" r="2.6" fill="#a8402a"/>
<circle cx="511.4" cy="499.6" r="2.6" fill="#a8402a"/>
<defs><clipPath id="padclip"><rect x="379.0" y="353.90000000000003" width="24.8" height="47.4" rx="12.4"/><rect x="419.0" y="353.90000000000003" width="24.8" height="47.4" rx="12.4"/><rect x="459.1" y="353.90000000000003" width="24.8" height="47.4" rx="12.4"/><rect x="379.0" y="424.8" width="24.8" height="47.4" rx="12.4"/><rect x="419.0" y="424.8" width="24.8" height="47.4" rx="12.4"/><rect x="459.1" y="424.8" width="24.8" height="47.4" rx="12.4"/><rect x="399.0" y="540" width="23.6" height="48" rx="11.8"/><rect x="439.3" y="540" width="23.6" height="48" rx="11.8"/><rect x="689.25" y="207.25" width="28.5" height="28.5"/><rect x="690.35" y="262.15" width="28.5" height="28.5"/><rect x="430.0" y="483.0" width="33" height="33"/><rect x="494.9" y="482.9" width="33" height="33"/></clipPath></defs><g clip-path="url(#padclip)" opacity="0.85"><path transform="translate(510.7 221.3) rotate(0) scale(0.7773 0.6700) translate(-11.0 -5)" d="M0 10V0L6 10V0M13.6 1.6L12.6 0.8H9.4L8.4 1.8V3.6L9.4 4.6H12.6L13.6 5.6V8.2L12.6 9.2H9.4L8.4 8.4M11 -0.6V10.6M21.8 0H16.4L16 4.6H20.6L22 5.8V8.6L20.8 10H17.2L16 8.8" fill="none" stroke="#b4dc5a" stroke-width="1.0" stroke-linecap="round" stroke-linejoin="round" vector-effect="non-scaling-stroke"/>
<path transform="translate(609.8 221.3) rotate(0) scale(0.8000 0.6700) translate(-11.0 -5)" d="M0 10V0L6 10V0M13.6 1.6L12.6 0.8H9.4L8.4 1.8V3.6L9.4 4.6H12.6L13.6 5.6V8.2L12.6 9.2H9.4L8.4 8.4M11 -0.6V10.6M21.8 0H16.4L16 4.6H20.6L22 5.8V8.6L20.8 10H17.2L16 8.8" fill="none" stroke="#b4dc5a" stroke-width="1.0" stroke-linecap="round" stroke-linejoin="round" vector-effect="non-scaling-stroke"/>
<path transform="translate(389.8 337.7) rotate(0) scale(0.8364 0.6600) translate(-11.0 -5)" d="M0 10V0L6 10V0M13.6 1.6L12.6 0.8H9.4L8.4 1.8V3.6L9.4 4.6H12.6L13.6 5.6V8.2L12.6 9.2H9.4L8.4 8.4M11 -0.6V10.6M21.8 0H16.4L16 4.6H20.6L22 5.8V8.6L20.8 10H17.2L16 8.8" fill="none" stroke="#b4dc5a" stroke-width="1.0" stroke-linecap="round" stroke-linejoin="round" vector-effect="non-scaling-stroke"/>
<path transform="translate(411.8 281.6) rotate(0) scale(0.7400 0.7000) translate(-15.0 -5)" d="M0 10V0L6 10V0M13.6 1.6L12.6 0.8H9.4L8.4 1.8V3.6L9.4 4.6H12.6L13.6 5.6V8.2L12.6 9.2H9.4L8.4 8.4M11 -0.6V10.6M16.8 2.2L19 0V10M16.8 10H21.2M24.8 2.2L27 0V10M24.8 10H29.2" fill="none" stroke="#b4dc5a" stroke-width="1.0" stroke-linecap="round" stroke-linejoin="round" vector-effect="non-scaling-stroke"/>
<path transform="translate(469.4 259.6) rotate(0) scale(0.7909 0.7000) translate(-11.0 -5)" d="M0 10V0L6 10V0M13.6 1.6L12.6 0.8H9.4L8.4 1.8V3.6L9.4 4.6H12.6L13.6 5.6V8.2L12.6 9.2H9.4L8.4 8.4M11 -0.6V10.6M16 1.2L17 0H21L22 1.2V3.8L21 4.9H18.2M21 4.9L22 6V8.8L21 10H17L16 8.8" fill="none" stroke="#b4dc5a" stroke-width="1.0" stroke-linecap="round" stroke-linejoin="round" vector-effect="non-scaling-stroke"/>
<path transform="translate(538.2 268.5) rotate(0) scale(0.8182 0.6600) translate(-11.0 -5)" d="M0 10V0L6 10V0M13.6 1.6L12.6 0.8H9.4L8.4 1.8V3.6L9.4 4.6H12.6L13.6 5.6V8.2L12.6 9.2H9.4L8.4 8.4M11 -0.6V10.6M16 1.2L17 0H21L22 1.2V3.8L21 4.9H18.2M21 4.9L22 6V8.8L21 10H17L16 8.8" fill="none" stroke="#b4dc5a" stroke-width="1.0" stroke-linecap="round" stroke-linejoin="round" vector-effect="non-scaling-stroke"/>
<path transform="translate(468.5 302.4) rotate(0) scale(0.7727 0.6900) translate(-11.0 -5)" d="M0 10V0L6 10V0M13.6 1.6L12.6 0.8H9.4L8.4 1.8V3.6L9.4 4.6H12.6L13.6 5.6V8.2L12.6 9.2H9.4L8.4 8.4M11 -0.6V10.6M22 4.6L21 5.6H17L16 4.6V1L17 0H21L22 1V8.6L20.6 10H17.4L16.4 9" fill="none" stroke="#b4dc5a" stroke-width="1.0" stroke-linecap="round" stroke-linejoin="round" vector-effect="non-scaling-stroke"/>
<path transform="translate(547.2 288.2) rotate(0) scale(0.8182 0.7000) translate(-11.0 -5)" d="M0 10V0L6 10V0M13.6 1.6L12.6 0.8H9.4L8.4 1.8V3.6L9.4 4.6H12.6L13.6 5.6V8.2L12.6 9.2H9.4L8.4 8.4M11 -0.6V10.6M22 4.6L21 5.6H17L16 4.6V1L17 0H21L22 1V8.6L20.6 10H17.4L16.4 9" fill="none" stroke="#b4dc5a" stroke-width="1.0" stroke-linecap="round" stroke-linejoin="round" vector-effect="non-scaling-stroke"/>
<path transform="translate(642.5 268.7) rotate(0) scale(0.7773 0.7000) translate(-11.0 -5)" d="M0 10V0L6 10V0M13.6 1.6L12.6 0.8H9.4L8.4 1.8V3.6L9.4 4.6H12.6L13.6 5.6V8.2L12.6 9.2H9.4L8.4 8.4M11 -0.6V10.6M16 0H22L18 10" fill="none" stroke="#b4dc5a" stroke-width="1.0" stroke-linecap="round" stroke-linejoin="round" vector-effect="non-scaling-stroke"/>
<path transform="translate(695.7 248.3) rotate(0) scale(0.8133 0.7600) translate(-15.0 -5)" d="M0 10V0L6 10V0M13.6 1.6L12.6 0.8H9.4L8.4 1.8V3.6L9.4 4.6H12.6L13.6 5.6V8.2L12.6 9.2H9.4L8.4 8.4M11 -0.6V10.6M16.8 2.2L19 0V10M16.8 10H21.2M25.6 0H28.4L30 1.8V8.2L28.4 10H25.6L24 8.2V1.8Z" fill="none" stroke="#b4dc5a" stroke-width="1.0" stroke-linecap="round" stroke-linejoin="round" vector-effect="non-scaling-stroke"/>
<path transform="translate(675.3 308.3) rotate(0) scale(0.8182 0.6900) translate(-11.0 -5)" d="M0 10V0L6 10V0M13.6 1.6L12.6 0.8H9.4L8.4 1.8V3.6L9.4 4.6H12.6L13.6 5.6V8.2L12.6 9.2H9.4L8.4 8.4M11 -0.6V10.6M21.8 0H16.4L16 4.6H20.6L22 5.8V8.6L20.8 10H17.2L16 8.8" fill="none" stroke="#b4dc5a" stroke-width="1.0" stroke-linecap="round" stroke-linejoin="round" vector-effect="non-scaling-stroke"/>
<path transform="translate(600.9 445.6) rotate(0) scale(0.8091 0.6600) translate(-11.0 -5)" d="M0 10V0L6 10V0M13.6 1.6L12.6 0.8H9.4L8.4 1.8V3.6L9.4 4.6H12.6L13.6 5.6V8.2L12.6 9.2H9.4L8.4 8.4M11 -0.6V10.6M20.4 10V0L16 6.8H22" fill="none" stroke="#b4dc5a" stroke-width="1.0" stroke-linecap="round" stroke-linejoin="round" vector-effect="non-scaling-stroke"/>
<path transform="translate(649.7 461.9) rotate(0) scale(0.8136 0.6800) translate(-11.0 -5)" d="M0 10V0L6 10V0M13.6 1.6L12.6 0.8H9.4L8.4 1.8V3.6L9.4 4.6H12.6L13.6 5.6V8.2L12.6 9.2H9.4L8.4 8.4M11 -0.6V10.6M21.8 0H16.4L16 4.6H20.6L22 5.8V8.6L20.8 10H17.2L16 8.8" fill="none" stroke="#b4dc5a" stroke-width="1.0" stroke-linecap="round" stroke-linejoin="round" vector-effect="non-scaling-stroke"/>
<path transform="translate(519.6 536.5) rotate(0) scale(1.1267 1.0800) translate(-15.0 -5)" d="M0 10V0L6 10V0M13.6 1.6L12.6 0.8H9.4L8.4 1.8V3.6L9.4 4.6H12.6L13.6 5.6V8.2L12.6 9.2H9.4L8.4 8.4M11 -0.6V10.6M16.8 2.2L19 0V10M16.8 10H21.2M24.8 2.2L27 0V10M24.8 10H29.2" fill="none" stroke="#b4dc5a" stroke-width="1.3" stroke-linecap="round" stroke-linejoin="round" vector-effect="non-scaling-stroke"/>
<path transform="translate(567.5 566.2) rotate(0) scale(1.0333 1.0000) translate(-15.0 -5)" d="M0 10V0L6 10V0M13.6 1.6L12.6 0.8H9.4L8.4 1.8V3.6L9.4 4.6H12.6L13.6 5.6V8.2L12.6 9.2H9.4L8.4 8.4M11 -0.6V10.6M16.8 2.2L19 0V10M16.8 10H21.2M25.6 0H28.4L30 1.8V8.2L28.4 10H25.6L24 8.2V1.8Z" fill="none" stroke="#b4dc5a" stroke-width="1.3" stroke-linecap="round" stroke-linejoin="round" vector-effect="non-scaling-stroke"/>
<path transform="translate(452.7 607) rotate(0) scale(1.0467 0.9800) translate(-15.0 -5)" d="M0 10V0L6 10V0M13.6 1.6L12.6 0.8H9.4L8.4 1.8V3.6L9.4 4.6H12.6L13.6 5.6V8.2L12.6 9.2H9.4L8.4 8.4M11 -0.6V10.6M16.8 2.2L19 0V10M16.8 10H21.2M25.6 0H28.4L30 1.8V8.2L28.4 10H25.6L24 8.2V1.8Z" fill="none" stroke="#b4dc5a" stroke-width="1.3" stroke-linecap="round" stroke-linejoin="round" vector-effect="non-scaling-stroke"/>
<path transform="translate(370.2 292) rotate(-90) scale(0.8182 0.7000) translate(-11.0 -5)" d="M0 10V0L6 10V0M13.6 1.6L12.6 0.8H9.4L8.4 1.8V3.6L9.4 4.6H12.6L13.6 5.6V8.2L12.6 9.2H9.4L8.4 8.4M11 -0.6V10.6M21.8 0H16.4L16 4.6H20.6L22 5.8V8.6L20.8 10H17.2L16 8.8" fill="none" stroke="#b4dc5a" stroke-width="1.0" stroke-linecap="round" stroke-linejoin="round" vector-effect="non-scaling-stroke"/>
<path transform="translate(594.3 297.2) rotate(-90) scale(0.8182 0.7000) translate(-11.0 -5)" d="M0 10V0L6 10V0M13.6 1.6L12.6 0.8H9.4L8.4 1.8V3.6L9.4 4.6H12.6L13.6 5.6V8.2L12.6 9.2H9.4L8.4 8.4M11 -0.6V10.6M17 0H21L21.8 1V3.8L21 4.8H17L16.2 3.8V1ZM17 4.8L16 5.8V9L17 10H21L22 9V5.8L21 4.8" fill="none" stroke="#b4dc5a" stroke-width="1.0" stroke-linecap="round" stroke-linejoin="round" vector-effect="non-scaling-stroke"/>
<path transform="translate(631 313.4) rotate(-90) scale(0.8182 0.7000) translate(-11.0 -5)" d="M0 10V0L6 10V0M13.6 1.6L12.6 0.8H9.4L8.4 1.8V3.6L9.4 4.6H12.6L13.6 5.6V8.2L12.6 9.2H9.4L8.4 8.4M11 -0.6V10.6M20.4 10V0L16 6.8H22" fill="none" stroke="#b4dc5a" stroke-width="1.0" stroke-linecap="round" stroke-linejoin="round" vector-effect="non-scaling-stroke"/>
<path transform="translate(572.6 387.5) rotate(-90) scale(0.7727 0.7000) translate(-11.0 -5)" d="M0 10V0L6 10V0M13.6 1.6L12.6 0.8H9.4L8.4 1.8V3.6L9.4 4.6H12.6L13.6 5.6V8.2L12.6 9.2H9.4L8.4 8.4M11 -0.6V10.6M17 0H21L21.8 1V3.8L21 4.8H17L16.2 3.8V1ZM17 4.8L16 5.8V9L17 10H21L22 9V5.8L21 4.8" fill="none" stroke="#b4dc5a" stroke-width="1.0" stroke-linecap="round" stroke-linejoin="round" vector-effect="non-scaling-stroke"/>
<path transform="translate(612.6 345.6) rotate(-90) scale(0.7727 0.6600) translate(-11.0 -5)" d="M0 10V0L6 10V0M13.6 1.6L12.6 0.8H9.4L8.4 1.8V3.6L9.4 4.6H12.6L13.6 5.6V8.2L12.6 9.2H9.4L8.4 8.4M11 -0.6V10.6M16 0H22L18 10" fill="none" stroke="#b4dc5a" stroke-width="1.0" stroke-linecap="round" stroke-linejoin="round" vector-effect="non-scaling-stroke"/>
<path transform="translate(652.6 384.1) rotate(-90) scale(0.7727 0.7000) translate(-11.0 -5)" d="M0 10V0L6 10V0M13.6 1.6L12.6 0.8H9.4L8.4 1.8V3.6L9.4 4.6H12.6L13.6 5.6V8.2L12.6 9.2H9.4L8.4 8.4M11 -0.6V10.6M20.4 10V0L16 6.8H22" fill="none" stroke="#b4dc5a" stroke-width="1.0" stroke-linecap="round" stroke-linejoin="round" vector-effect="non-scaling-stroke"/>
<path transform="translate(693.4 376.5) rotate(-90) scale(0.8182 0.7400) translate(-11.0 -5)" d="M0 10V0L6 10V0M13.6 1.6L12.6 0.8H9.4L8.4 1.8V3.6L9.4 4.6H12.6L13.6 5.6V8.2L12.6 9.2H9.4L8.4 8.4M11 -0.6V10.6M21.8 0H16.4L16 4.6H20.6L22 5.8V8.6L20.8 10H17.2L16 8.8" fill="none" stroke="#b4dc5a" stroke-width="1.0" stroke-linecap="round" stroke-linejoin="round" vector-effect="non-scaling-stroke"/>
<path transform="translate(731.2 349.8) rotate(-90) scale(0.8100 0.7600) translate(-15.0 -5)" d="M0 10V0L6 10V0M13.6 1.6L12.6 0.8H9.4L8.4 1.8V3.6L9.4 4.6H12.6L13.6 5.6V8.2L12.6 9.2H9.4L8.4 8.4M11 -0.6V10.6M16.8 2.2L19 0V10M16.8 10H21.2M25.6 0H28.4L30 1.8V8.2L28.4 10H25.6L24 8.2V1.8Z" fill="none" stroke="#b4dc5a" stroke-width="1.0" stroke-linecap="round" stroke-linejoin="round" vector-effect="non-scaling-stroke"/>
<path transform="translate(471.3 413.5) rotate(-90) scale(1.1667 1.1500) translate(-15.0 -5)" d="M0 10V0L6 10V0M13.6 1.6L12.6 0.8H9.4L8.4 1.8V3.6L9.4 4.6H12.6L13.6 5.6V8.2L12.6 9.2H9.4L8.4 8.4M11 -0.6V10.6M16.8 2.2L19 0V10M16.8 10H21.2M24.8 2.2L27 0V10M24.8 10H29.2" fill="none" stroke="#b4dc5a" stroke-width="1.3" stroke-linecap="round" stroke-linejoin="round" vector-effect="non-scaling-stroke"/>
<path transform="translate(478.9 495.9) rotate(-90) scale(1.1667 1.1500) translate(-15.0 -5)" d="M0 10V0L6 10V0M13.6 1.6L12.6 0.8H9.4L8.4 1.8V3.6L9.4 4.6H12.6L13.6 5.6V8.2L12.6 9.2H9.4L8.4 8.4M11 -0.6V10.6M16.8 2.2L19 0V10M16.8 10H21.2M24.8 2.2L27 0V10M24.8 10H29.2" fill="none" stroke="#b4dc5a" stroke-width="1.3" stroke-linecap="round" stroke-linejoin="round" vector-effect="non-scaling-stroke"/>
<path transform="translate(391.2 413.4) rotate(-90) scale(0.8100 0.7600) translate(-15.0 -5)" d="M0 10V0L6 10V0M13.6 1.6L12.6 0.8H9.4L8.4 1.8V3.6L9.4 4.6H12.6L13.6 5.6V8.2L12.6 9.2H9.4L8.4 8.4M11 -0.6V10.6M16.8 2.2L19 0V10M16.8 10H21.2M25.6 0H28.4L30 1.8V8.2L28.4 10H25.6L24 8.2V1.8Z" fill="none" stroke="#b4dc5a" stroke-width="1.0" stroke-linecap="round" stroke-linejoin="round" vector-effect="non-scaling-stroke"/>
<path transform="translate(391.6 495.3) rotate(-90) scale(0.8133 0.7600) translate(-15.0 -5)" d="M0 10V0L6 10V0M13.6 1.6L12.6 0.8H9.4L8.4 1.8V3.6L9.4 4.6H12.6L13.6 5.6V8.2L12.6 9.2H9.4L8.4 8.4M11 -0.6V10.6M16.8 2.2L19 0V10M16.8 10H21.2M25.6 0H28.4L30 1.8V8.2L28.4 10H25.6L24 8.2V1.8Z" fill="none" stroke="#b4dc5a" stroke-width="1.0" stroke-linecap="round" stroke-linejoin="round" vector-effect="non-scaling-stroke"/>
<path transform="translate(431.5 472) rotate(-90) scale(0.8091 0.7400) translate(-11.0 -5)" d="M0 10V0L6 10V0M13.6 1.6L12.6 0.8H9.4L8.4 1.8V3.6L9.4 4.6H12.6L13.6 5.6V8.2L12.6 9.2H9.4L8.4 8.4M11 -0.6V10.6M20.4 10V0L16 6.8H22" fill="none" stroke="#b4dc5a" stroke-width="1.0" stroke-linecap="round" stroke-linejoin="round" vector-effect="non-scaling-stroke"/>
<path transform="translate(391.7 235.3) rotate(-31.5) scale(0.8182 0.7000) translate(-11.0 -5)" d="M0 10V0L6 10V0M13.6 1.6L12.6 0.8H9.4L8.4 1.8V3.6L9.4 4.6H12.6L13.6 5.6V8.2L12.6 9.2H9.4L8.4 8.4M11 -0.6V10.6M21.8 0H16.4L16 4.6H20.6L22 5.8V8.6L20.8 10H17.2L16 8.8" fill="none" stroke="#b4dc5a" stroke-width="1.0" stroke-linecap="round" stroke-linejoin="round" vector-effect="non-scaling-stroke"/>
<path transform="translate(449 340.5) rotate(45) scale(0.7000 0.6800) translate(-15.0 -5)" d="M0 10V0L6 10V0M13.6 1.6L12.6 0.8H9.4L8.4 1.8V3.6L9.4 4.6H12.6L13.6 5.6V8.2L12.6 9.2H9.4L8.4 8.4M11 -0.6V10.6M16.8 2.2L19 0V10M16.8 10H21.2M24.8 2.2L27 0V10M24.8 10H29.2" fill="none" stroke="#b4dc5a" stroke-width="1.0" stroke-linecap="round" stroke-linejoin="round" vector-effect="non-scaling-stroke"/>
<path transform="translate(522.5 355.4) rotate(-45) scale(1.1333 1.1000) translate(-15.0 -5)" d="M0 10V0L6 10V0M13.6 1.6L12.6 0.8H9.4L8.4 1.8V3.6L9.4 4.6H12.6L13.6 5.6V8.2L12.6 9.2H9.4L8.4 8.4M11 -0.6V10.6M16.8 2.2L19 0V10M16.8 10H21.2M24.8 2.2L27 0V10M24.8 10H29.2" fill="none" stroke="#b4dc5a" stroke-width="1.3" stroke-linecap="round" stroke-linejoin="round" vector-effect="non-scaling-stroke"/>
<path transform="translate(582 353) rotate(-42) scale(0.7727 0.6600) translate(-11.0 -5)" d="M0 10V0L6 10V0M13.6 1.6L12.6 0.8H9.4L8.4 1.8V3.6L9.4 4.6H12.6L13.6 5.6V8.2L12.6 9.2H9.4L8.4 8.4M11 -0.6V10.6M17 0H21L21.8 1V3.8L21 4.8H17L16.2 3.8V1ZM17 4.8L16 5.8V9L17 10H21L22 9V5.8L21 4.8" fill="none" stroke="#b4dc5a" stroke-width="1.0" stroke-linecap="round" stroke-linejoin="round" vector-effect="non-scaling-stroke"/>
<path transform="translate(640.5 346.8) rotate(45) scale(0.7500 0.6500) translate(-11.0 -5)" d="M0 10V0L6 10V0M13.6 1.6L12.6 0.8H9.4L8.4 1.8V3.6L9.4 4.6H12.6L13.6 5.6V8.2L12.6 9.2H9.4L8.4 8.4M11 -0.6V10.6M20.4 10V0L16 6.8H22" fill="none" stroke="#b4dc5a" stroke-width="1.0" stroke-linecap="round" stroke-linejoin="round" vector-effect="non-scaling-stroke"/>
<path transform="translate(538.5 472.1) rotate(-45) scale(0.7045 0.6300) translate(-11.0 -5)" d="M0 10V0L6 10V0M13.6 1.6L12.6 0.8H9.4L8.4 1.8V3.6L9.4 4.6H12.6L13.6 5.6V8.2L12.6 9.2H9.4L8.4 8.4M11 -0.6V10.6M20.4 10V0L16 6.8H22" fill="none" stroke="#b4dc5a" stroke-width="1.0" stroke-linecap="round" stroke-linejoin="round" vector-effect="non-scaling-stroke"/>
<path transform="translate(707.4 476.3) rotate(-45) scale(0.7000 0.6600) translate(-15.0 -5)" d="M0 10V0L6 10V0M13.6 1.6L12.6 0.8H9.4L8.4 1.8V3.6L9.4 4.6H12.6L13.6 5.6V8.2L12.6 9.2H9.4L8.4 8.4M11 -0.6V10.6M16.8 2.2L19 0V10M16.8 10H21.2M25.6 0H28.4L30 1.8V8.2L28.4 10H25.6L24 8.2V1.8Z" fill="none" stroke="#b4dc5a" stroke-width="1.0" stroke-linecap="round" stroke-linejoin="round" vector-effect="non-scaling-stroke"/>
<path transform="translate(504 586.6) rotate(-45) scale(1.0333 0.9500) translate(-15.0 -5)" d="M0 10V0L6 10V0M13.6 1.6L12.6 0.8H9.4L8.4 1.8V3.6L9.4 4.6H12.6L13.6 5.6V8.2L12.6 9.2H9.4L8.4 8.4M11 -0.6V10.6M16.8 2.2L19 0V10M16.8 10H21.2M25.6 0H28.4L30 1.8V8.2L28.4 10H25.6L24 8.2V1.8Z" fill="none" stroke="#b4dc5a" stroke-width="1.3" stroke-linecap="round" stroke-linejoin="round" vector-effect="non-scaling-stroke"/>
<path transform="translate(632 545.3) rotate(-45) scale(0.9533 0.9000) translate(-15.0 -5)" d="M0 10V0L6 10V0M13.6 1.6L12.6 0.8H9.4L8.4 1.8V3.6L9.4 4.6H12.6L13.6 5.6V8.2L12.6 9.2H9.4L8.4 8.4M11 -0.6V10.6M16.8 2.2L19 0V10M16.8 10H21.2M25.6 0H28.4L30 1.8V8.2L28.4 10H25.6L24 8.2V1.8Z" fill="none" stroke="#b4dc5a" stroke-width="1.3" stroke-linecap="round" stroke-linejoin="round" vector-effect="non-scaling-stroke"/><path transform="translate(431.3 362.7) rotate(-90) scale(0.7545 0.7000) translate(-11.0 -5)" d="M0 10V0L6 10V0M13.6 1.6L12.6 0.8H9.4L8.4 1.8V3.6L9.4 4.6H12.6L13.6 5.6V8.2L12.6 9.2H9.4L8.4 8.4M11 -0.6V10.6M21.8 0H16.4L16 4.6H20.6L22 5.8V8.6L20.8 10H17.2L16 8.8" fill="none" stroke="#b4dc5a" stroke-width="1.0" stroke-linecap="round" stroke-linejoin="round" vector-effect="non-scaling-stroke"/></g>
</svg>
</svg>
</body></html>
